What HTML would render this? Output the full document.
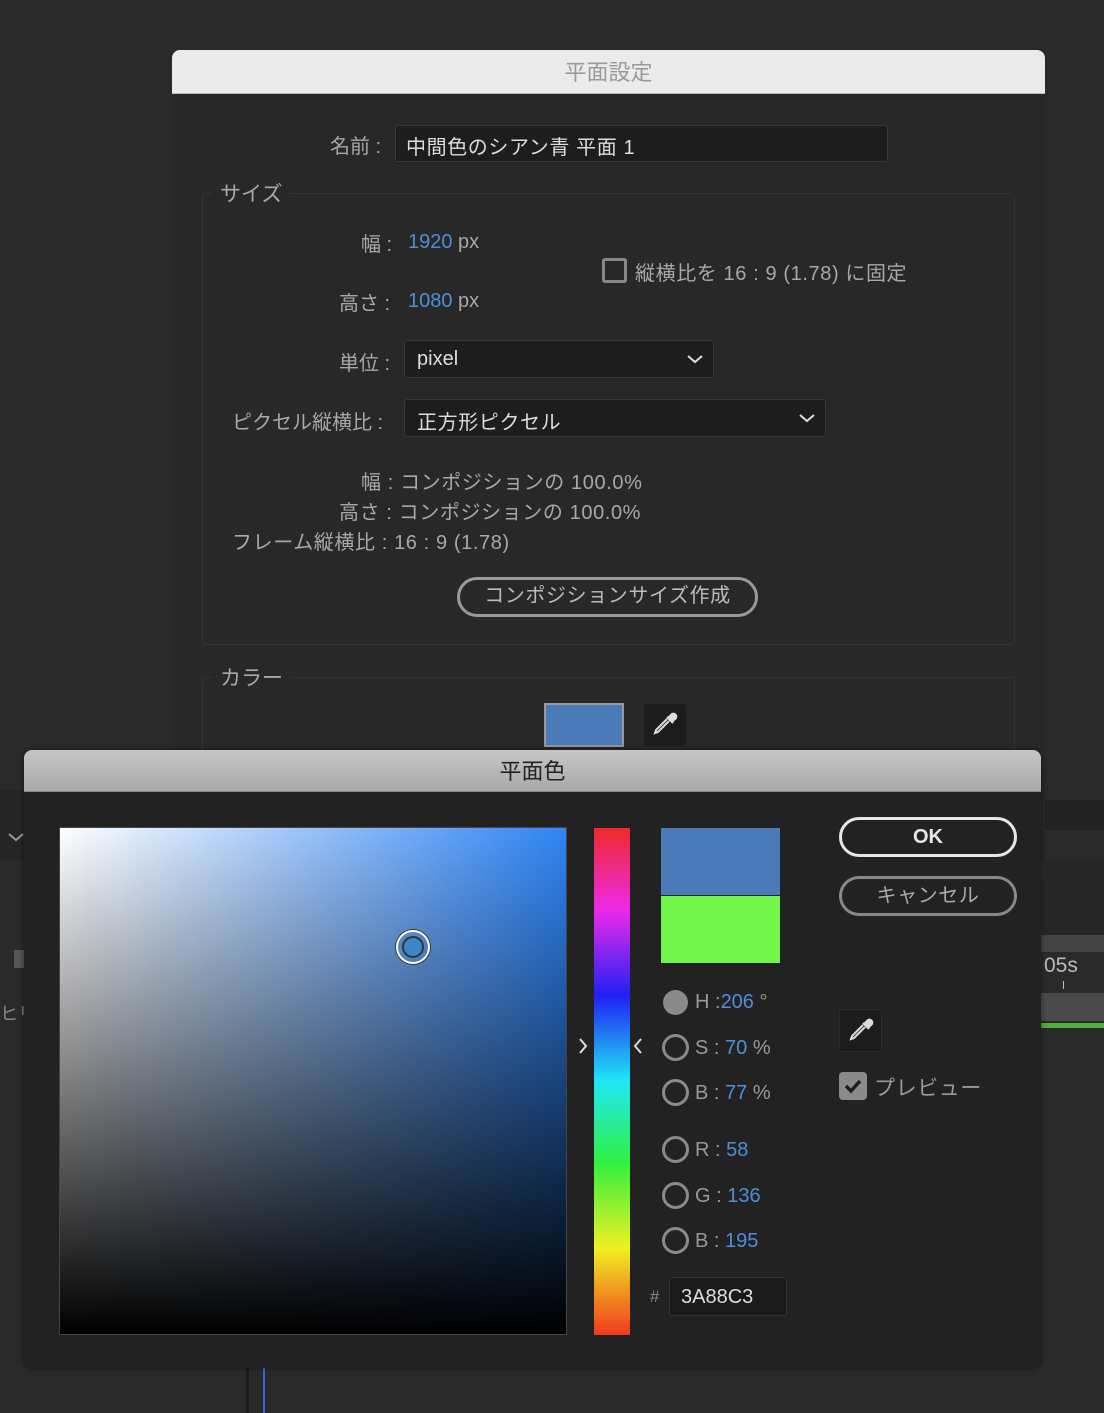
<!DOCTYPE html>
<html><head><meta charset="utf-8"><style>
*{margin:0;padding:0;box-sizing:border-box}
body{width:1104px;height:1413px;background:#2a2a2a;position:relative;overflow:hidden;font-family:"Liberation Sans","Noto Sans CJK JP",sans-serif;color:#a8a8a8;font-size:20px}
.a{position:absolute;white-space:nowrap}
.blue{color:#4f8fd6}
.dlg1{left:172px;top:50px;width:873px;height:830px;background:#282828;border-radius:8px 8px 0 0;overflow:hidden}
.t1{left:0;top:0;width:873px;height:44px;background:#ebebeb;color:#9a9a9a;text-align:center;line-height:46px;font-size:22px;border-bottom:1px solid #bbb}
.box{border:1px solid #333;border-radius:4px}
.dd{background:#1d1d1d;border:1px solid #383838;border-radius:3px;color:#ddd}
.dlg2{left:24px;top:750px;width:1017px;height:618px;background:#222;border-radius:8px;overflow:hidden;box-shadow:0 0 6px rgba(0,0,0,.5)}
.t2{left:0;top:0;width:1017px;height:42px;background:linear-gradient(#c6c6c6,#a9a9a9);color:#222;text-align:center;line-height:44px;font-size:22px;border-bottom:1px solid #888}
.rad{width:27px;height:27px;border:3px solid #8a8a8a;border-radius:50%}
.btn{border:3px solid #e6e6e6;border-radius:20px;text-align:center;color:#e6e6e6;font-size:20px}
.ls{letter-spacing:0.6px}
</style></head><body>
<div class="a" style="left:0;top:790px;width:24px;height:70px;background:#252525"></div>
<svg class="a" style="left:8px;top:832px" width="16" height="10"><path d="M1 2l7 6 7-6" stroke="#999" stroke-width="2" fill="none"/></svg>
<div class="a" style="left:14px;top:950px;width:10px;height:18px;background:#555"></div>
<div class="a" style="left:0;top:1000px;color:#888;font-size:18px">ヒリ</div>
<div class="a" style="left:1041px;top:800px;width:63px;height:30px;background:#222"></div>
<div class="a" style="left:1041px;top:860px;width:63px;height:75px;background:#262626"></div>
<div class="a" style="left:1041px;top:935px;width:63px;height:17px;background:#444"></div>
<div class="a" style="left:1044px;top:954px;color:#bbb;font-size:21px">05s</div>
<div class="a" style="left:1063px;top:981px;width:1px;height:8px;background:#bbb"></div>
<div class="a" style="left:1041px;top:993px;width:63px;height:28px;background:#4a4a4a"></div>
<div class="a" style="left:1041px;top:1023px;width:63px;height:5px;background:#4caf3c"></div>
<div class="a" style="left:246px;top:1368px;width:3px;height:45px;background:#1a1a1a"></div>
<div class="a" style="left:263px;top:1368px;width:2px;height:45px;background:#3a6ad0"></div>

<div class="a dlg1">
 <div class="a t1">平面設定</div>
 <div class="a" style="left:158px;top:80px">名前 :</div>
 <div class="a dd ls" style="left:223px;top:75px;width:493px;height:37px;padding:5px 10px">中間色のシアン青 平面 1</div>
 <div class="a box" style="left:30px;top:143px;width:813px;height:452px"></div>
 <div class="a" style="left:40px;top:128px;background:#282828;padding:0 8px;font-size:21px">サイズ</div>
 <div class="a" style="left:189px;top:178px">幅 :</div>
 <div class="a" style="left:236px;top:181px"><span class="blue">1920</span> px</div>
 <div class="a" style="left:167px;top:237px">高さ :</div>
 <div class="a" style="left:236px;top:240px"><span class="blue">1080</span> px</div>
 <div class="a" style="left:430px;top:208px;width:25px;height:25px;border:3px solid #888;border-radius:3px"></div>
 <div class="a ls" style="left:463px;top:207px">縦横比を 16 : 9 (1.78) に固定</div>
 <div class="a" style="left:167px;top:297px">単位 :</div>
 <div class="a dd" style="left:232px;top:290px;width:310px;height:38px;padding:7px 12px">pixel<svg style="position:absolute;right:10px;top:13px" width="16" height="10"><path d="M1 2l7 6 7-6" stroke="#ddd" stroke-width="2" fill="none"/></svg></div>
 <div class="a" style="left:60px;top:356px">ピクセル縦横比 :</div>
 <div class="a dd ls" style="left:232px;top:349px;width:422px;height:38px;padding:6px 12px">正方形ピクセル<svg style="position:absolute;right:10px;top:13px" width="16" height="10"><path d="M1 2l7 6 7-6" stroke="#ddd" stroke-width="2" fill="none"/></svg></div>
 <div class="a ls" style="left:189px;top:416px">幅 : コンポジションの 100.0%</div>
 <div class="a ls" style="left:167px;top:446px">高さ : コンポジションの 100.0%</div>
 <div class="a ls" style="left:60px;top:476px">フレーム縦横比 : 16 : 9 (1.78)</div>
 <div class="a ls" style="left:285px;top:527px;width:301px;height:40px;border:3px solid #999;border-radius:20px;text-align:center;line-height:33px;color:#bbb">コンポジションサイズ作成</div>
 <div class="a box" style="left:30px;top:627px;width:813px;height:220px"></div>
 <div class="a" style="left:40px;top:612px;background:#282828;padding:0 8px;font-size:21px">カラー</div>
 <div class="a" style="left:372px;top:653px;width:80px;height:44px;background:#4a7ab8;border:2px solid #999"></div>
 <div class="a" style="left:472px;top:654px;width:42px;height:42px;background:#1c1c1c;border-radius:3px">
  <svg width="42" height="42"><g fill="none" stroke="#ddd" stroke-width="2"><path d="M28 10a3 3 0 014 4l-3 3-4-4z" fill="#ddd"/><path d="M23 13l6 6M25 17l-11 11-3 1 1-3 11-11"/></g></svg></div>
</div>

<div class="a dlg2">
 <div class="a t2">平面色</div>
 <div class="a" style="left:35px;top:77px;width:508px;height:508px;border:1px solid #444;background:linear-gradient(to top,#000,rgba(0,0,0,0)),linear-gradient(to right,#fff,#2f84f5)"></div>
 <div class="a" style="left:372px;top:180px;width:34px;height:34px;border:2px solid #fff;border-radius:50%;box-shadow:0 0 0 1px #333"></div>
 <div class="a" style="left:378px;top:186px;width:22px;height:22px;border:2px solid #333;border-radius:50%;background:#3a88c3"></div>
 <div class="a" style="left:570px;top:78px;width:36px;height:507px;background:linear-gradient(#ef2a2a,#ee2ae8 16%,#2020f5 33%,#20e8f5 50%,#30f040 66%,#f0f020 83%,#f03a20)"></div>
 <svg class="a" style="left:554px;top:288px" width="10" height="16"><path d="M2 1l6 7-6 7" stroke="#ddd" stroke-width="2" fill="none"/></svg>
 <svg class="a" style="left:609px;top:288px" width="10" height="16"><path d="M8 1l-6 7 6 7" stroke="#ddd" stroke-width="2" fill="none"/></svg>
 <div class="a" style="left:637px;top:78px;width:119px;height:67px;background:#4a7ab8"></div>
 <div class="a" style="left:637px;top:146px;width:119px;height:67px;background:#74f54c"></div>
 <div class="a" style="left:639px;top:240px;width:25px;height:25px;border-radius:50%;background:#8a8a8a"></div>
 <div class="a" style="left:671px;top:241px;color:#999">H :<span class="blue">206</span> °</div>
 <div class="a rad" style="left:638px;top:284px"></div>
 <div class="a" style="left:671px;top:287px;color:#999">S : <span class="blue">70</span> %</div>
 <div class="a rad" style="left:638px;top:329px"></div>
 <div class="a" style="left:671px;top:332px;color:#999">B : <span class="blue">77</span> %</div>
 <div class="a rad" style="left:638px;top:386px"></div>
 <div class="a" style="left:671px;top:389px;color:#999">R : <span class="blue">58</span></div>
 <div class="a rad" style="left:638px;top:432px"></div>
 <div class="a" style="left:671px;top:435px;color:#999">G : <span class="blue">136</span></div>
 <div class="a rad" style="left:638px;top:477px"></div>
 <div class="a" style="left:671px;top:480px;color:#999">B : <span class="blue">195</span></div>
 <div class="a" style="left:626px;top:537px;color:#888;font-size:17px">#</div>
 <div class="a" style="left:645px;top:527px;width:118px;height:39px;background:#1a1a1a;border:1px solid #333;border-radius:3px;color:#ddd;padding:8px 11px">3A88C3</div>
 <div class="a btn" style="left:815px;top:67px;width:178px;height:40px;line-height:34px;font-weight:bold">OK</div>
 <div class="a btn ls" style="left:815px;top:126px;width:178px;height:40px;line-height:34px;border-color:#888;color:#aaa">キャンセル</div>
 <div class="a" style="left:815px;top:259px;width:43px;height:43px;background:#1c1c1c;border:1px solid #2c2c2c;border-radius:3px">
  <svg width="42" height="42"><g fill="none" stroke="#ddd" stroke-width="2"><path d="M28 10a3 3 0 014 4l-3 3-4-4z" fill="#ddd"/><path d="M23 13l6 6M25 17l-11 11-3 1 1-3 11-11"/></g></svg></div>
 <div class="a" style="left:815px;top:322px;width:28px;height:28px;background:#8a8a8a;border-radius:4px">
  <svg width="28" height="28"><path d="M7 14l5 5 9-10" stroke="#1e1e1e" stroke-width="3.5" fill="none"/></svg></div>
 <div class="a ls" style="left:850px;top:322px;color:#999;font-size:21px">プレビュー</div>
</div>
</body></html>
